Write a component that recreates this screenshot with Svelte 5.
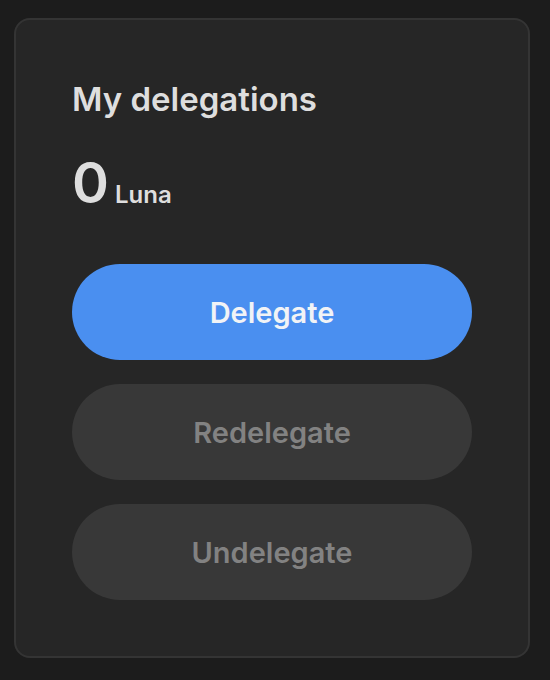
<script>
  const balance = { amount: '0', unit: 'Luna' };
  const actions = [
    { label: 'Delegate', enabled: true },
    { label: 'Redelegate', enabled: false },
    { label: 'Undelegate', enabled: false },
  ];
</script>

<main>
  <section aria-labelledby="title">
    <h1 id="title">My delegations</h1>
    <p><strong>{balance.amount}</strong> <span>{balance.unit}</span></p>
    <div class="actions">
      {#each actions as action}
        <button type="button" disabled={!action.enabled}>{action.label}</button>
      {/each}
    </div>
  </section>
</main>

<style>
  :global(body) {
    background: #1c1c1c;
  }

  main {
    padding: 18px 20px 22px 14px;
    font-family: 'Gotham', 'Inter', 'Liberation Sans', sans-serif;
    color: #dedede;
  }

  section {
    padding: 56px;
    border: 2px solid #343434;
    border-radius: 16px;
    background: #262626;
  }

  h1 {
    margin: 0;
    font-size: 33px;
    font-weight: 600;
    line-height: 46px;
  }

  p {
    display: flex;
    align-items: baseline;
    gap: 6px;
    margin: 28px 0 36px;
    line-height: 66px;
  }

  strong {
    font-size: 56px;
    font-weight: 600;
  }

  span {
    font-size: 24px;
    font-weight: 600;
  }

  .actions {
    display: flex;
    flex-direction: column;
    gap: 24px;
  }

  button {
    height: 96px;
    padding: 0 24px;
    border: 0;
    border-radius: 48px;
    background: #4a8ff0;
    color: #f1f3f6;
    font: inherit;
    font-size: 29px;
    font-weight: 600;
    cursor: pointer;
  }

  button:disabled {
    background: #383838;
    color: #828282;
    cursor: default;
  }
</style>
